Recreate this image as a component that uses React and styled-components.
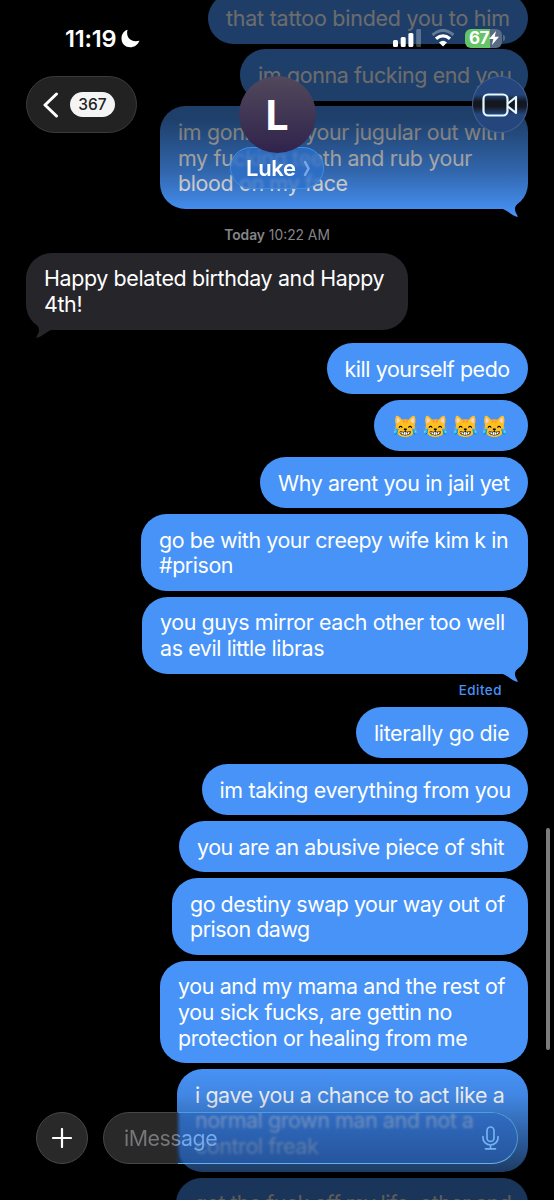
import styled, { createGlobalStyle } from "styled-components";

const GlobalStyle = createGlobalStyle`
  * {
    box-sizing: border-box;
  }
  body {
    margin: 0;
    background-color: #000;
    font-family: Inter, "Liberation Sans", sans-serif;
    -webkit-font-smoothing: antialiased;
  }
`;

const Screen = styled.main`
  position: relative;
  width: 554px;
  height: 1200px;
  overflow: hidden;
  background-color: #000;
`;

const Thread = styled.section`
  display: flex;
  flex-direction: column;
  gap: 5.7px;
  margin-top: -7.5px;
  padding: 0 26px;
`;

const Bubble = styled.div`
  position: relative;
  flex-shrink: 0;
  align-self: ${({ $received }) => ($received ? "flex-start" : "flex-end")};
  width: ${({ $width }) => $width}px;
  padding: 13.5px 0 12.1px 18px;
  border-radius: 25.6px;
  background-color: ${({ $received }) => ($received ? "#26252a" : "#4793f8")};
  color: #fff;
  font-size: 21.4px;
  font-weight: 400;
  line-height: 25.7px;
  letter-spacing: ${({ $tracking }) => $tracking || -0.35}px;
  white-space: pre;
`;

const TailShape = styled.svg`
  position: absolute;
  bottom: -9px;
  ${({ $received }) =>
    $received ? "left: 0; transform: scaleX(-1);" : "right: 0;"}
`;

const Stamp = styled.div`
  height: 32.4px;
  padding-top: 10px;
  text-align: center;
  font-size: 13.8px;
  line-height: 20px;
  color: #858589;
  b {
    font-weight: 600;
  }
`;

const Edited = styled.div`
  height: 22px;
  padding: 1px 26px 0 0;
  text-align: right;
  font-size: 13.4px;
  font-weight: 500;
  line-height: 20px;
  letter-spacing: 0.5px;
  color: #4793f8;
`;

const Gap = styled.div`
  height: 1.8px;
`;

const Fade = styled.div`
  position: absolute;
  left: 0;
  right: 0;
  pointer-events: none;
`;

const TopFade = styled(Fade)`
  top: 0;
  height: 215px;
  background: linear-gradient(
    rgba(0, 0, 0, 0.58) 0,
    rgba(0, 0, 0, 0.57) 120px,
    rgba(0, 0, 0, 0.3) 172px,
    rgba(0, 0, 0, 0.06) 207px,
    transparent
  );
`;

const BottomFade = styled(Fade)`
  bottom: 0;
  height: 134px;
  background: linear-gradient(
    transparent,
    rgba(0, 0, 0, 0.09) 30px,
    rgba(0, 0, 0, 0.5) 92px,
    rgba(0, 0, 0, 0.64) 112px
  );
`;

const Header = styled.header`
  position: absolute;
  top: 0;
  left: 0;
  right: 0;
  color: #fff;
`;

const StatusBar = styled.div`
  display: flex;
  justify-content: space-between;
  align-items: center;
  height: 76px;
  padding: 0 49px 0 65px;
`;

const Clock = styled.div`
  display: flex;
  align-items: center;
  gap: 5px;
  font-size: 23.5px;
  font-weight: 600;
  letter-spacing: -0.2px;
`;

const StatusIcons = styled.div`
  display: flex;
  align-items: center;
  gap: 10px;
`;

const Battery = styled.div`
  display: flex;
  align-items: center;
  gap: 1px;
`;

const BatteryBody = styled.div`
  display: flex;
  align-items: center;
  width: 37px;
  height: 19px;
  padding-left: 4px;
  border-radius: 6px;
  background: linear-gradient(90deg, #65c466 67%, #596b82 67%);
  font-size: 17px;
  font-weight: 700;
  letter-spacing: -0.6px;
`;

const BatteryCap = styled.div`
  width: 2px;
  height: 6px;
  border-radius: 0 2px 2px 0;
  background-color: #596b82;
`;

const NavBar = styled.div`
  display: grid;
  grid-template-columns: 1fr auto 1fr;
  align-items: start;
  padding: 0 26px;
`;

const BackButton = styled.button`
  display: flex;
  align-items: center;
  gap: 11px;
  width: 111px;
  height: 57px;
  padding: 0 0 0 16px;
  border: 1px solid #3b3b3b;
  border-radius: 29px;
  background-color: #222;
`;

const Unread = styled.span`
  width: 45px;
  height: 25px;
  border-radius: 13px;
  background-color: #f4f4f4;
  color: #222;
  font-family: Inter, sans-serif;
  font-size: 15.5px;
  font-weight: 500;
  line-height: 25px;
  text-align: center;
`;

const Contact = styled.div`
  display: flex;
  flex-direction: column;
  align-items: center;
`;

const Avatar = styled.div`
  position: relative;
  z-index: 1;
  width: 77px;
  height: 77px;
  border-radius: 50%;
  background: linear-gradient(#51495c, #30234c);
  font-size: 41px;
  font-weight: 700;
  line-height: 79px;
  text-align: center;
`;

const NamePill = styled.div`
  display: flex;
  align-items: center;
  gap: 7px;
  width: 94px;
  height: 42px;
  margin-top: -6px;
  padding-left: 15px;
  border: 1.5px solid #3f8fe6;
  border-radius: 21px;
  background-color: rgba(44, 112, 205, 0.7);
  backdrop-filter: blur(1.5px);
  font-size: 22px;
  font-weight: 600;
  letter-spacing: -0.3px;
`;

const VideoButton = styled.button`
  display: flex;
  align-items: center;
  justify-content: center;
  justify-self: end;
  width: 56px;
  height: 57px;
  padding: 0;
  border: 1px solid #41618f;
  border-radius: 50%;
  background: linear-gradient(
    #24467c 32%,
    #12161e 45%,
    #15181f 54%,
    #24467c 68%
  );
`;

const Composer = styled.footer`
  position: absolute;
  left: 36px;
  right: 36px;
  bottom: 36px;
  display: flex;
  gap: 15px;
`;

const AddButton = styled.button`
  display: flex;
  align-items: center;
  justify-content: center;
  width: 52px;
  height: 52px;
  padding: 0;
  border: 1px solid #474747;
  border-radius: 50%;
  background-color: #292929;
`;

const Field = styled.div`
  position: relative;
  display: flex;
  flex: 1;
  align-items: center;
  justify-content: space-between;
  height: 52px;
  padding: 0 18px 0 20px;
  border: 1px solid #474747;
  border-radius: 26px;
  background: linear-gradient(
    90deg,
    #292929 71px,
    rgba(42, 100, 190, 0.55) 77px
  );
  backdrop-filter: blur(1px);

  /* lit edge over the blue bubble */
  &::after {
    content: "";
    position: absolute;
    inset: -1px;
    border: 1px solid #4a9dea;
    border-bottom-color: #5fb2f2;
    border-radius: 26px;
    clip-path: inset(0 0 0 75px);
  }
`;

const Placeholder = styled.span`
  font-size: 21.4px;
  letter-spacing: -0.5px;
  background: linear-gradient(90deg, #77777b 50px, #74a9ec 58px);
  background-clip: text;
  color: transparent;
`;

const ScrollThumb = styled.div`
  position: absolute;
  top: 828px;
  right: 4px;
  width: 4px;
  height: 222px;
  border-radius: 2px;
  background-color: #7c7c7c;
`;

const olderMessages = [
  { width: 320, text: "that tattoo binded you to him", tracking: -0.2 },
  { width: 288, text: "im gonna fucking end you" },
  {
    width: 368,
    text: "im gonna rip your jugular out with\nmy fucking teeth and rub your\nblood on my face",
    tail: true,
  },
];

const messages = [
  { width: 201.5, text: "kill yourself pedo", tracking: -0.42 },
  { width: 154, text: "😹😹😹😹", tracking: 2.8 },
  { width: 268, text: "Why arent you in jail yet", tracking: -0.37 },
  {
    width: 387,
    text: "go be with your creepy wife kim k in\n#prison",
    tracking: -0.42,
  },
  {
    width: 386,
    text: "you guys mirror each other too well\nas evil little libras",
    tracking: -0.38,
    tail: true,
  },
];

const latestMessages = [
  { width: 172, text: "literally go die" },
  { width: 326.5, text: "im taking everything from you" },
  {
    width: 349,
    text: "you are an abusive piece of shit",
    tracking: -0.42,
  },
  {
    width: 356,
    text: "go destiny swap your way out of\nprison dawg",
    tracking: -0.46,
  },
  {
    width: 368,
    text: "you and my mama and the rest of\nyou sick fucks, are gettin no\nprotection or healing from me",
  },
  {
    width: 351,
    text: "i gave you a chance to act like a\nnormal grown man and not a\ncontrol freak",
    tracking: -0.4,
  },
  { width: 352, text: "get the fuck off my life, other and", tracking: -0.55 },
];

function Tail({ received }) {
  return (
    <TailShape $received={received} width="32" height="26" viewBox="0 0 32 26">
      <path
        d="M4 16.500C11 17 14 23 21.500 25Q22.300 24.500 20 21C18 17 19 14 22 11L14 8Z"
        fill={received ? "#26252a" : "#4793f8"}
      />
    </TailShape>
  );
}

function Message({ message, received }) {
  return (
    <Bubble
      $width={message.width}
      $tracking={message.tracking}
      $received={received}
    >
      {message.text}
      {message.tail && <Tail received={received} />}
    </Bubble>
  );
}

function MessageList({ items }) {
  return items.map((item) => <Message key={item.text} message={item} />);
}

function Signal() {
  return (
    <svg width="28" height="18" viewBox="0 0 28 18" fill="#fff">
      <rect x="0" y="11" width="5" height="7" rx="1.500" />
      <rect x="7.700" y="8" width="5" height="10" rx="1.500" />
      <rect x="15.400" y="4" width="5" height="14" rx="1.500" />
      <rect x="23.200" y="0" width="5" height="18" rx="1.500" opacity="0.27" />
    </svg>
  );
}

function Wifi() {
  return (
    <svg width="24" height="18" viewBox="0 0 24 18" fill="none" stroke="#fff">
      <path d="M1.500 6Q12-3 22.500 6" strokeWidth="3" opacity="0.3" />
      <path d="M5 9.800Q12 4 19 9.800" strokeWidth="3.300" />
      <path d="M8 13.500Q12 10 16 13.500L12 17.500Z" fill="#fff" stroke="none" />
    </svg>
  );
}

export default function App() {
  return (
    <>
      <GlobalStyle />
      <Screen>
        <Thread>
          <MessageList items={olderMessages} />
          <Stamp>
            <b>Today</b> 10:22 AM
          </Stamp>
          <Message
            received
            message={{
              width: 382,
              text: "Happy belated birthday and Happy\n4th!",
              tail: true,
            }}
          />
          <Gap />
          <MessageList items={messages} />
          <Edited>Edited</Edited>
          <MessageList items={latestMessages} />
        </Thread>
        <TopFade />
        <BottomFade />
        <ScrollThumb />

        <Header>
          <StatusBar>
            <Clock>
              11:19
              <svg width="19" height="19" viewBox="0 0 19 19" fill="#fff">
                <path d="M6.500.800C4.500 8.500 10 14 18.500 11.800C16.500 16.300 13 18.300 9.300 18.300C4 18.300.500 14.500.500 9.500C.500 5.500 2.700 2 6.500.800Z" />
              </svg>
            </Clock>
            <StatusIcons>
              <Signal />
              <Wifi />
              <Battery>
                <BatteryBody>
                  67
                  <svg width="10" height="14" viewBox="0 0 10 14" fill="#fff">
                    <path d="M7 0L0 8H4.300L3 14L10 5.800H5.700Z" />
                  </svg>
                </BatteryBody>
                <BatteryCap />
              </Battery>
            </StatusIcons>
          </StatusBar>
          <NavBar>
            <BackButton>
              <svg
                width="16"
                height="26"
                viewBox="0 0 16 26"
                fill="none"
                stroke="#fff"
                strokeWidth="3"
                strokeLinecap="round"
                strokeLinejoin="round"
              >
                <path d="M13.500 2L2 13L13.500 24" />
              </svg>
              <Unread>367</Unread>
            </BackButton>
            <Contact>
              <Avatar>L</Avatar>
              <NamePill>
                Luke
                <svg
                  width="8"
                  height="17"
                  viewBox="0 0 8 17"
                  fill="none"
                  stroke="#78a9e4"
                  strokeWidth="2.500"
                  strokeLinecap="round"
                >
                  <path d="M2 2L5.500 8.500L2 15" />
                </svg>
              </NamePill>
            </Contact>
            <VideoButton>
              <svg
                width="36"
                height="24"
                viewBox="0 0 36 24"
                fill="none"
                stroke="#e4f8ff"
                strokeWidth="2.200"
                strokeLinejoin="round"
              >
                <rect x="1.500" y="1.500" width="24" height="21" rx="4.500" />
                <path d="M26 10.500L34 4V20L26 13.500" />
              </svg>
            </VideoButton>
          </NavBar>
        </Header>

        <Composer>
          <AddButton>
            <svg
              width="20"
              height="20"
              viewBox="0 0 20 20"
              stroke="#fff"
              strokeWidth="2.200"
              strokeLinecap="round"
            >
              <path d="M10 1V19M1 10H19" />
            </svg>
          </AddButton>
          <Field>
            <Placeholder>iMessage</Placeholder>
            <svg
              width="17"
              height="24"
              viewBox="0 0 17 24"
              fill="none"
              stroke="#74b2f2"
              strokeWidth="1.700"
              strokeLinecap="round"
            >
              <rect x="5" y="1" width="7" height="14.500" rx="3.500" />
              <path d="M1 10.500V12A7.500 7 0 0 0 16 12V10.500M8.500 19V22.800M3.500 22.800H13.500" />
            </svg>
          </Field>
        </Composer>
      </Screen>
    </>
  );
}
